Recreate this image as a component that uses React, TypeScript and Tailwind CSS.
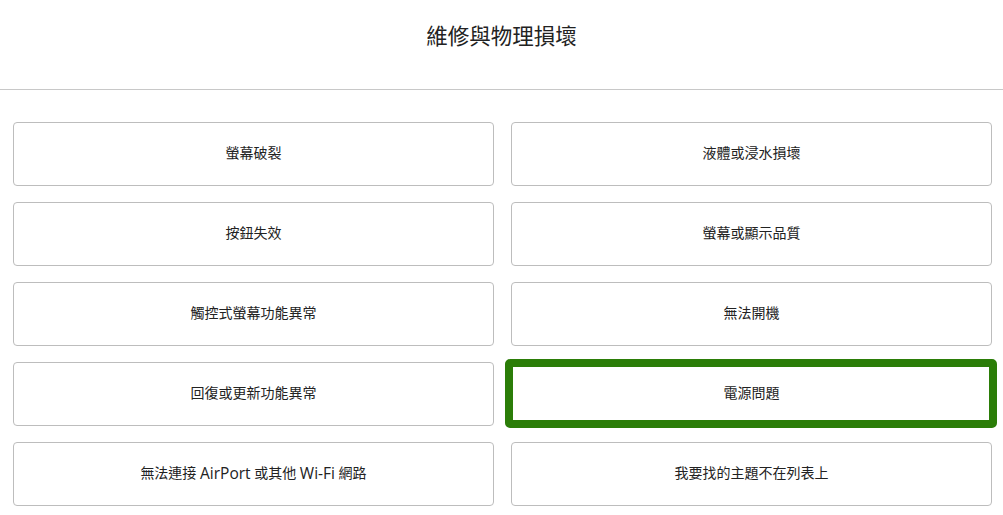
const LEFT = ['螢幕破裂', '按鈕失效', '觸控式螢幕功能異常', '回復或更新功能異常', '無法連接 AirPort 或其他 Wi-Fi 網路'];
const RIGHT = ['液體或浸水損壞', '螢幕或顯示品質', '無法開機', '電源問題', '我要找的主題不在列表上'];

const items: { label: string; active?: boolean }[] = [];
LEFT.forEach((l, i) => {
    items.push({ label: l });
    items.push({ label: RIGHT[i], active: RIGHT[i] === '電源問題' });
});

// latin words render a touch larger than the CJK text
const Label = ({ text }: { text: string }) => (
    <>
        {text.split(/([A-Za-z][A-Za-z-]*)/).map((part, i) =>
            i % 2 === 1 ? (
                <span key={i} className="text-[15.5px]" style={{ fontFamily: '"Open Sans", sans-serif' }}>
                    {part}
                </span>
            ) : (
                <span key={i}>{part}</span>
            )
        )}
    </>
);

const App = () => {
    return (
        <div
            className="min-h-screen bg-white text-[#333]"
            style={{ fontFamily: '"Open Sans", "Noto Sans CJK TC", sans-serif' }}
        >
            {/* Header */}
            <header className="h-[90px] border-b border-[#c8c8c8] flex justify-center pt-[21px]">
                <h1 className="text-[21.5px] leading-[30px] font-normal text-[#222]">維修與物理損壞</h1>
            </header>

            {/* Topic grid */}
            <main className="pt-[32px] pl-[13px] pr-[11px]">
                <div className="grid grid-cols-2 gap-x-[17px] gap-y-[16px]">
                    {items.map((item) => (
                        <div key={item.label} className="relative">
                            <button className="w-full h-[64px] flex items-center justify-center pb-[2px] bg-white border border-[#bdbdbd] rounded-[4px] text-[14px] leading-[20px] text-[#222] whitespace-pre">
                                <Label text={item.label} />
                            </button>
                            {item.active && (
                                <div className="absolute -top-[3px] -bottom-[2px] -left-[6px] -right-[5px] border-[8px] border-[#2b7d08] rounded-[5px] pointer-events-none" />
                            )}
                        </div>
                    ))}
                </div>
            </main>
        </div>
    );
};

export default App;
